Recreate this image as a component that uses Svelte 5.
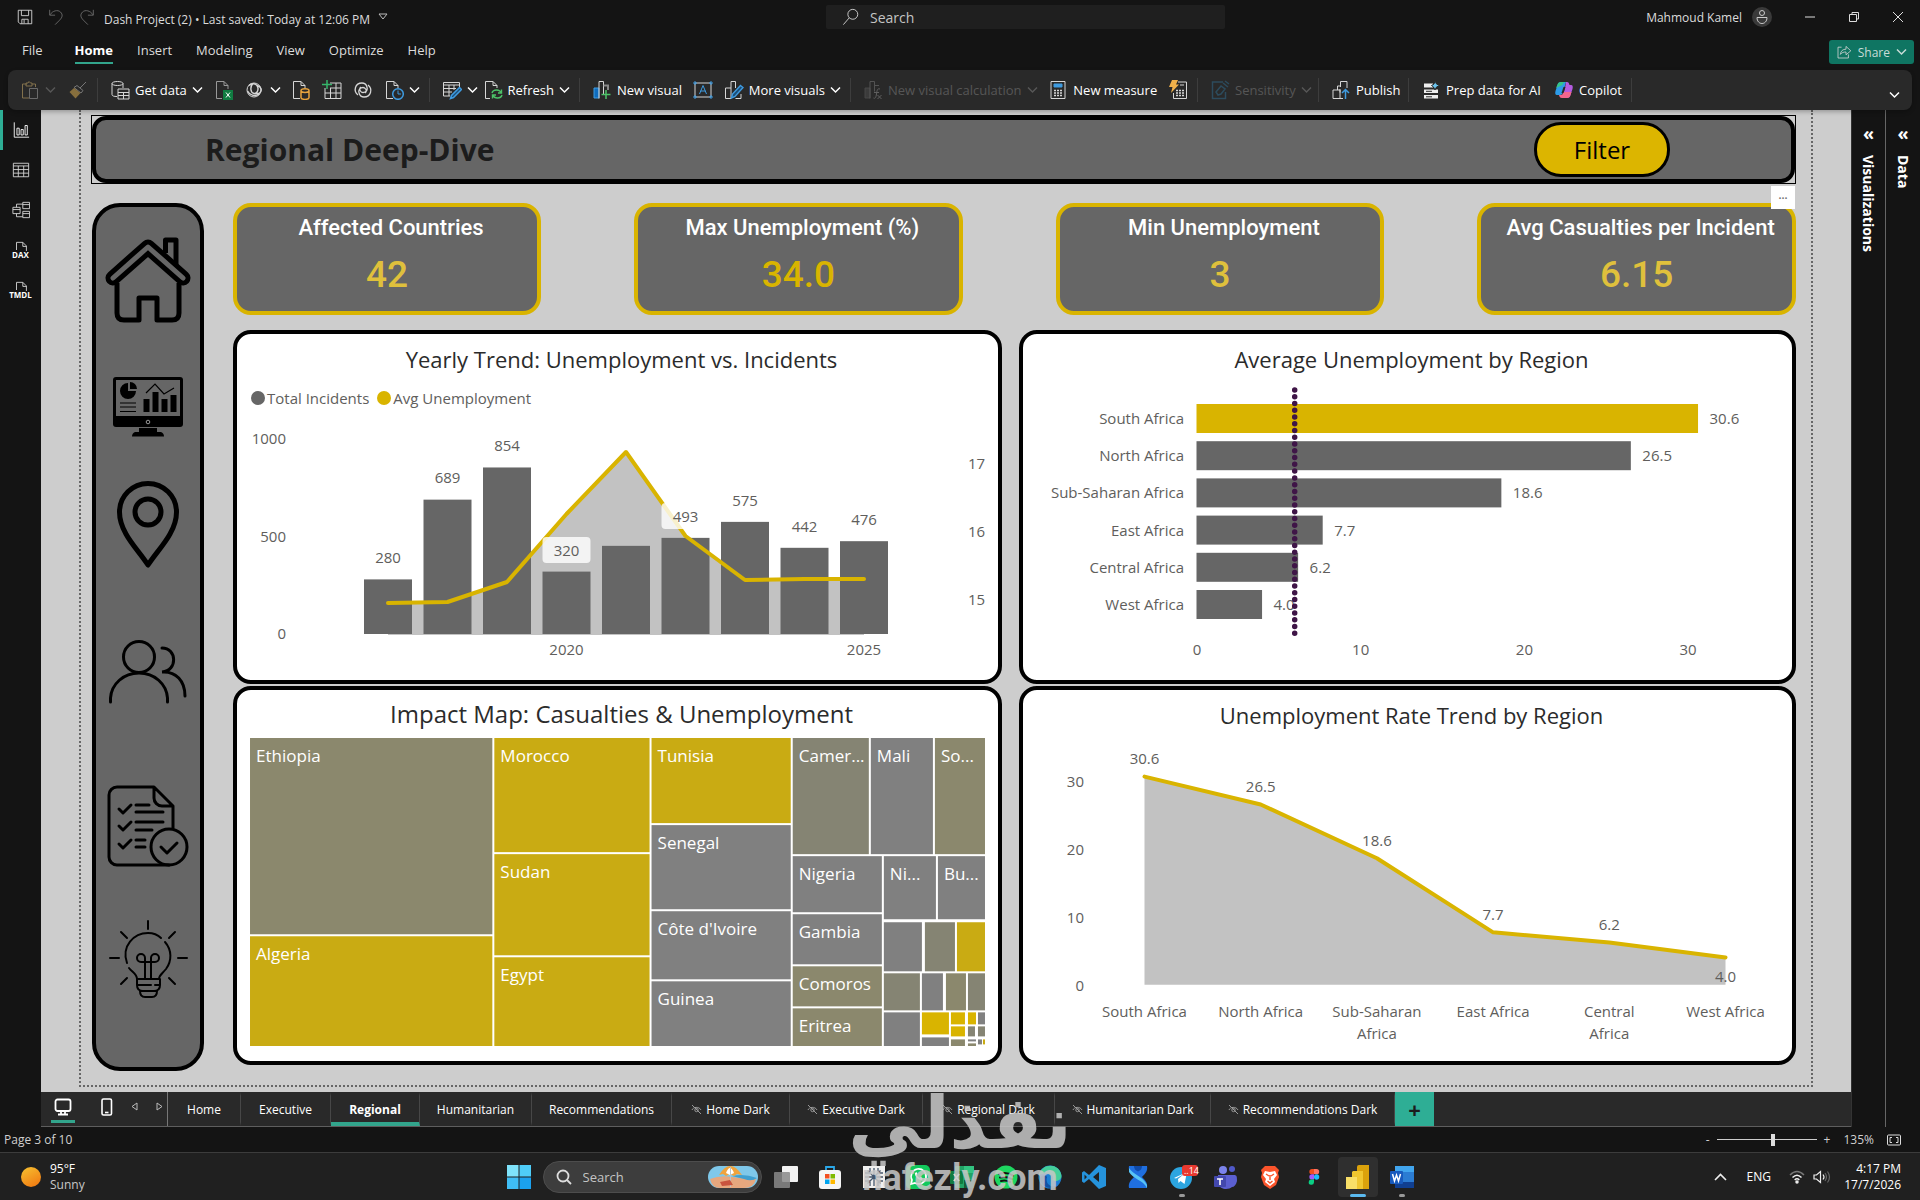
<script>
  const W = '#d6d6d6';

  // ribbon, title bar and rail glyphs, all on a 20x20 grid
  const icons = {
    save: `<path d="M2.5 2.5h15v15H4.5l-2-2zM6 2.5v6h8v-6M6.500 17.500v-5h7v5M9 13v4"/>`,
    undo: `<path d="M3 2v6h6M3.500 7.500C6 3 12 1.500 15 4.500c3 3 2 6-1 9l-5 5"/>`,
    redo: `<path d="M17 2v6h-6M16.500 7.500C14 3 8 1.500 5 4.500c-3 3-2 6 1 9l5 5"/>`,
    search: `<circle cx="12" cy="7" r="5.500"/><path d="M8 11l-6.500 7.500"/>`,
    paste: `<path d="M7 4H2.500v14H9M12 4h3.500v3M6 3h2l1-1.500L10.500 3H12v3H6z" stroke="#a8905c"/><path d="M9.500 8.500h8v10h-8z" stroke="#888"/>`,
    brush: `<path d="M18 2l-6 6M9 5.500l6 5-2 2.500-7-5.500z" stroke="#999"/><path d="M6 8l6.500 5-5 5.500L1.500 12z" fill="#b08d46" stroke="none"/>`,
    data: `<path d="M2 3.500v11c0 1.500 2 2 5 2M13 3.500V8M2 3.500C2 2.500 4 1.500 7.500 1.500S13 2.500 13 3.500 11 5.500 7.500 5.500 2 4.500 2 3.500zM8 9h11v10H8zM8 12.500h11M8 15.500h11M13.500 12.500V19"/>`,
    excel: `<path d="M8 18.500H2.500v-17H10l4 4V9M10 1.500v4h4" stroke="#999"/><path d="M9 10h10v10H9z" fill="#107c41" stroke="none"/><path d="M12 12.500l4 5M16 12.500l-4 5" stroke="#fff"/>`,
    lake: `<circle cx="9" cy="10" r="7"/><path d="M4 5.500c2-2 6-2.500 8 0 2 3 1 8-3 8-4-1-4-7-1-10M12 5.500c4 1 6 5 2 8l-5 0M2.500 11c2 4 7 6 12 3" stroke-width="1.400"/>`,
    sql: `<path d="M9 18.500H2.500v-17H10l4 4V8M10 1.500v4h4"/><path d="M10 10.500v7c0 2.500 8 2.500 8 0v-7c0-2.500-8-2.500-8 0s8 2.500 8 0" stroke="#e8a33d" stroke-width="1.500"/>`,
    enter: `<path d="M8 3h11v15.500H3V8M3 13h16M8 8h11M8.500 8v10M14 3v15"/><path d="M5 0v9M0 4.500h10" stroke="#35b56a" stroke-width="1.500"/>`,
    verse: `<path d="M5 15C0 11 2 3 9 3c5 0 7 7 3 9-4 2-7-3-4-5M15 5c5 4 3 12-4 12-5 0-7-7-3-9 4-2 7 3 4 5" stroke-width="1.300"/>`,
    recent: `<path d="M9 18.500H2.500v-17H10l4 4V8M10 1.500v4h4"/><circle cx="14" cy="14" r="5.300" stroke="#3f9be0" stroke-width="1.500"/><path d="M14 10.500V14h3" stroke="#3f9be0"/>`,
    transform: `<path d="M8 16H1.500V2.500h16V7M1.500 5h16M1.500 8.500H14M1.500 12H10M7 5v11M12 5v5"/><path d="M17.500 7.500l2 2-8 8-3 1 1-3z" stroke="#3f9be0" fill="#1b4e78" stroke-width="1.500"/>`,
    refresh: `<path d="M7 18.500H2.500v-17H10l4 4V8M10 1.500v4h4"/><path d="M9 13c1-4 8-4 9 0M18.500 9.500V13H15M19 15c-1 4-8 4-9 0M9.500 18.500V15H13" stroke="#4cc267" stroke-width="1.400"/>`,
    visual: `<path d="M2 8h5v10H2z" fill="#0f6cbd" stroke="#3f9be0"/><path d="M7 18.500v-17h4.500v13"/><path d="M11.500 5.500H16V10" stroke="#888" stroke-width="2"/><path d="M14 10v9M9.500 14.500h9" stroke="#4cc267" stroke-width="1.500"/>`,
    text: `<path d="M2 3h16v14H2z"/><path d="M6.500 14L10 5.500l3.500 8.500M7.500 11h5M1 2h2v2H1zM17 2h2v2h-2zM1 16h2v2H1zM17 16h2v2h-2z" stroke="#3f9be0"/>`,
    more: `<path d="M7 18.500H1.500V8H7m0 10.500v-17h4.500V8M17 14v4.500h-5.500"/><path d="M16.500 5.500l2.500 2-8 9-3.500 1.500 1-4z" stroke="#3f9be0" fill="#1b4e78" stroke-width="1.400"/>`,
    calc: `<path d="M2 8h5v10H2z" fill="#444" stroke="#555"/><path d="M7 18.500v-17h4.500v10M11.500 5.500H16" stroke="#666"/><path d="M17 9c-3-1-3 2-3.500 5s-1 5-3 4M11 12.500h5M14.500 15l4 4M18.500 15l-4 4" stroke="#777"/>`,
    measure: `<path d="M3 1.500h14v17H3z"/><path d="M6 4h8v3H6z" fill="#3f9be0" stroke="#3f9be0"/><path d="M6 10.500h2M9 10.500h2M12 10.500h2M6 13h2M9 13h2M12 13h2M6 15.500h2M9 15.500h2M12 15.500h2" stroke-width="1.600"/>`,
    quick: `<path d="M10 2h8.500v16.500h-13V13M12 5h4"/><path d="M8 10.500h2M11 10.500h2M14 10.500h2M8 13h2M11 13h2M14 13h2M8 15.500h2M11 15.500h2M14 15.500h2" stroke-width="1.600"/><path d="M4 0h6L8 4.500h3L3 13l1.500-6H1z" fill="#f0b04a" stroke="none"/>`,
    sensitivity: `<path d="M13 2H2.500v16.500h13V12M6 12l5-6 4 3-4 5-3 1zM13 3l5 4M15 1l4 3" stroke="#2e5a73" stroke-width="1.500"/>`,
    publish: `<path d="M2 10h7v8.500H2zM9 12.500V9M6.500 10V6H10M9.500 7V1.500H16V8M9 18.500h3"/><path d="M14.500 19V9.500M11 13l3.500-3.500L18 13" stroke="#3f9be0" stroke-width="1.500"/>`,
    prep: `<path d="M3 3.500h9v4H3zM3 9.500h14v3.500H3zM3 15h14v3.500H3z" fill="#eee" stroke="none"/><path d="M14 1l1.500 3 3 1.500-3 1.500L14 10l-1.500-3-2-1.500L13 4z" fill="#6cc4ee" stroke="#292929"/><path d="M5 11.300h6M5 16.800h6" stroke="#292929"/>`,
    copilot: `<path d="M7 2h5l-3 10c-.5 2-1.500 3-3.500 3H3c-2 0-2-2-1.500-4L3.500 5C4 3 5 2 7 2z" fill="#2d9be8" stroke="none"/><path d="M2 8l1.500-3.500C4 3 5 2 7 2h5c-2 0-3 1-3.500 3z" fill="#35c48a" stroke="none"/><path d="M12 2h1c1.500 0 2 1 2.500 3H17c2 0 2 2 1.500 4l-2 6c-.5 2-1.500 3-3.500 3H8l3-10z" fill="#b45be0" stroke="none"/><path d="M17.500 12l-1 3c-.5 2-1.500 3-3.500 3H8c-2 0-2.500-1-3-3h1.500c2 0 2.500-1 3-3z" fill="#f3668d" stroke="none"/><path d="M9.500 7l2 0-2 6h-2z" fill="#292929" stroke="none"/>`,
    share: `<path d="M7 4H2.500v13.500h13V13M5.500 13c.5-4.500 3-6.500 7-6.500V3l6 5.500-6 5V10c-3 0-5 .5-7 3z"/>`,
    report: `<path d="M2.500 1.500v16.500H19M5.500 8h2.500v7.500H5.500zM10 9.500h2.500v6H10zM14.500 5h2.500v10.500h-2.500z" stroke="#fff"/>`,
    table: `<path d="M1.500 2.500h17v15h-17zM1.500 5.500h17M1.500 9.500h17M1.500 13.500h17M7 5.500v12M13 5.500v12"/>`,
    model: `<path d="M1 7h8v7H1zM1 9.500h8M12 1.500h7.500v7H12zM12 4h7.500M12 11.500h7.500v7H12zM12 14h7.500M5 7V3.500h7M5 14v3.500h7"/>`,
    sheet: `<path d="M5 10V1.500h7l4 4V12M12 1.500v4.500h4"/>`
  };

  const ribbon = [
    { width: 90, items: [{ icon: 'paste', chevron: true, off: true }, { icon: 'brush', off: true }] },
    { width: 332, items: [{ icon: 'data', label: 'Get data', chevron: true }, { icon: 'excel' }, { icon: 'lake', chevron: true }, { icon: 'sql' }, { icon: 'enter' }, { icon: 'verse' }, { icon: 'recent', chevron: true }] },
    { width: 150, items: [{ icon: 'transform', chevron: true }, { icon: 'refresh', label: 'Refresh', chevron: true }] },
    { width: 271, items: [{ icon: 'visual', label: 'New visual' }, { icon: 'text' }, { icon: 'more', label: 'More visuals', chevron: true }] },
    { width: 347, items: [{ icon: 'calc', label: 'New visual calculation', chevron: true, off: true }, { icon: 'measure', label: 'New measure' }, { icon: 'quick' }] },
    { width: 121, items: [{ icon: 'sensitivity', label: 'Sensitivity', chevron: true, off: true }] },
    { width: 90, items: [{ icon: 'publish', label: 'Publish' }] },
    { width: 223, items: [{ icon: 'prep', label: 'Prep data for AI' }, { icon: 'copilot', label: 'Copilot' }] }
  ];

  const menus = ['File', 'Home', 'Insert', 'Modeling', 'View', 'Optimize', 'Help'];

  const kpis = [
    { title: 'Affected Countries', value: '42', grow: 308 },
    { title: 'Max Unemployment (%)', value: '34.0', grow: 329, deep: true },
    { title: 'Min Unemployment', value: '3', grow: 329 },
    { title: 'Avg Casualties per Incident', value: '6.15', grow: 319 }
  ];

  const years = [
    { n: 280, line: 191, label: 146 },
    { n: 689, line: 190, label: 66 },
    { n: 854, line: 170, label: 34 },
    { n: 320, line: 102, label: 139, boxed: true },
    { n: 452, line: 40 },
    { n: 493, line: 124, label: 105, boxed: true },
    { n: 575, line: 168, label: 89 },
    { n: 442, line: 167, label: 115 },
    { n: 476, line: 167, label: 108 }
  ];
  const yearX = (i) => 151 + i * 59.5;
  const yearLine = years.map((y, i) => `${yearX(i)},${y.line}`).join(' ');

  const regions = [
    { name: ['South Africa'], rate: 30.6, label: 19 },
    { name: ['North Africa'], rate: 26.5, label: 47 },
    { name: ['Sub-Saharan', 'Africa'], rate: 18.6, label: 101 },
    { name: ['East Africa'], rate: 7.7, label: 175 },
    { name: ['Central', 'Africa'], rate: 6.2, label: 185 },
    { name: ['West Africa'], rate: 4.0, label: 237 }
  ];
  const regionX = (i) => 121.5 + i * 116.2;
  const rateY = (r) => 244.7 - r * 6.8;
  const rateLine = regions.map((r, i) => `${regionX(i)},${rateY(r.rate)}`).join(' ');

  const olive = '#8b886d';
  const moss = '#858473';
  const gold = '#c9ab13';
  const bright = '#d9b400';
  const gray = '#808080';

  // x, y, width, height, colour, label
  const tiles = [
    [0, 0, 242, 196, olive, 'Ethiopia'],
    [0, 198, 242, 110, gold, 'Algeria'],
    [244, 0, 155, 114, gold, 'Morocco'],
    [244, 116, 155, 101, gold, 'Sudan'],
    [244, 219, 155, 89, gold, 'Egypt'],
    [401, 0, 139, 85, gold, 'Tunisia'],
    [401, 87, 139, 84, gray, 'Senegal'],
    [401, 173, 139, 68, gray, "Côte d'Ivoire"],
    [401, 243, 139, 65, gray, 'Guinea'],
    [542, 0, 76, 116, moss, 'Camer...'],
    [620, 0, 62, 116, gray, 'Mali'],
    [684, 0, 50, 116, olive, 'So...'],
    [542, 118, 89, 56, gray, 'Nigeria'],
    [542, 176, 89, 50, gray, 'Gambia'],
    [542, 228, 89, 40, olive, 'Comoros'],
    [542, 270, 89, 38, olive, 'Eritrea'],
    [633, 118, 52, 63, gray, 'Ni...'],
    [687, 118, 47, 63, gray, 'Bu...'],
    [633, 184, 38, 49, gray],
    [674, 184, 30, 49, moss],
    [706, 184, 28, 49, gold],
    [633, 235, 36, 37, moss],
    [671, 235, 21, 37, gray],
    [695, 235, 20, 37, olive],
    [717, 235, 17, 37, moss],
    [633, 274, 36, 34, gray],
    [671, 274, 27, 22, bright],
    [671, 299, 27, 9, gray],
    [700, 274, 14, 12, bright],
    [700, 288, 14, 10, bright],
    [700, 301, 14, 7, olive],
    [717, 274, 8, 12, bright],
    [727, 274, 7, 12, gray],
    [717, 288, 7, 10, moss],
    [727, 288, 7, 10, moss],
    [717, 301, 8, 2, gray],
    [717, 305, 8, 3, olive],
    [727, 301, 4, 5, gray],
    [732, 301, 2, 5, gold]
  ];

  const tabs = [
    { name: 'Home', width: 73 },
    { name: 'Executive', width: 90 },
    { name: 'Regional', width: 89, active: true },
    { name: 'Humanitarian', width: 112 },
    { name: 'Recommendations', width: 140 },
    { name: 'Home Dark', width: 118, hidden: true },
    { name: 'Executive Dark', width: 133, hidden: true },
    { name: 'Regional Dark', width: 132, hidden: true },
    { name: 'Humanitarian Dark', width: 156, hidden: true },
    { name: 'Recommendations Dark', width: 184, hidden: true }
  ];

  // taskbar apps, 24x24
  const apps = [
    { name: 'Task view', art: `<rect x="8" y="1" width="16" height="16" rx="1" fill="#f2f2f2"/><rect x="0" y="7" width="16" height="16" rx="1" fill="#8a8a8a" opacity=".85"/>` },
    { name: 'Store', art: `<path d="M8 5V2h8v3" fill="none" stroke="#2aa7e8" stroke-width="1.800"/><rect x="1" y="5" width="22" height="19" rx="3" fill="#f5f5f5"/><path fill="#f25022" d="M7 9h4.500v4.500H7z"/><path fill="#7fba00" d="M12.500 9H17v4.500h-4.500z"/><path fill="#00a4ef" d="M7 14.500h4.500V19H7z"/><path fill="#ffb900" d="M12.500 14.500H17V19h-4.500z"/>` },
    { name: 'Snow', art: `<rect x="1" y="1" width="22" height="22" fill="#f0f0f0"/><path d="M12 3v18M3 12h18M5.500 5.500l13 13M18.500 5.500l-13 13M8 3v5H3M16 3v5h5M8 21v-5H3M16 21v-5h5" stroke="#44566b" stroke-width="1.300" fill="none"/>` },
    { name: 'WhatsApp', art: `<rect width="24" height="24" rx="5" fill="#12c95c"/><path d="M5 19l1-4a7.500 7.500 0 1 1 3 3z" fill="none" stroke="#fff" stroke-width="1.700"/><path d="M9 8c0 4 3 7 7 7l.5-2-2-1-1 1-3-3 1-1-1-2z" fill="#fff"/>` },
    { name: 'Excel', art: `<rect x="5" y="1" width="19" height="22" rx="1" fill="#21a366"/><path d="M14 1h10v7H14z" fill="#33c481"/><path d="M14 15h10v8H14z" fill="#185c37"/><rect y="6" width="13" height="13" rx="1" fill="#107c41"/><path d="M4 9l5 7M9 9l-5 7" stroke="#fff" stroke-width="1.700"/>` },
    { name: 'Spotify', art: `<circle cx="12" cy="12" r="11.500" fill="#1ed760"/><path d="M5 9c5-1.500 10-1 14 1.500M6 12.500c4-1 8-.5 11.500 1.500M7 16c3-.8 6-.5 9 1" fill="none" stroke="#111" stroke-width="2" stroke-linecap="round"/>` },
    { name: 'Edge', art: `<circle cx="12" cy="12" r="11.500" fill="#1b7fd4"/><path d="M1 10C3-2 22-3 23.500 11c0 5-7 6-9 4 3-5-5-9-13.500-5z" fill="#45cf9a"/><path d="M9 12c-2 6 3 11 10 9-7 5-17 0-17-8 2-4 6-3 7-1z" fill="#1252a3"/>` },
    { name: 'VS Code', art: `<path d="M17 0l7 3v18l-7 3L7 14l-5 4-2-1.500v-9L2 6l5 4zM17 7l-6 5 6 5zM2.500 9.500v5L5 12z" fill="#2593dc" fill-rule="evenodd"/>` },
    { name: 'Designer', art: `<path d="M3 1h18c1 5-2 8-5 11 3 3 6 6 5 11H3c-1-5 2-8 5-11-3-3-6-6-5-11z" fill="#1f6fe0"/><path d="M3 3c4 7 14 8 18 17v3C17 15 7 14 3 7z" fill="#58c4f5"/><path d="M8 1h8q0 4-4 5.500Q8 5 8 1z" fill="#0f4aa8"/>` },
    { name: 'Telegram', art: `<circle cx="11" cy="13" r="11" fill="#2ca5e0"/><path d="M4 13l13-6-2.500 12-4-3-2 2-.5-4 6-5-8 4.500z" fill="#fff"/><rect x="12" y="0" width="16" height="11" rx="3" fill="#e8392f"/><text x="14" y="9" font-size="9" fill="#fff">..14</text>`, dot: true },
    { name: 'Teams', art: `<circle cx="9" cy="5" r="4" fill="#7b83eb"/><circle cx="18" cy="4" r="3" fill="#5059c9"/><path d="M4 10h16c3 0 3 2 3 6-1 4-3 6-5 6-3 3-12 3-14-3z" fill="#5b5fd0"/><rect x="0" y="11" width="12" height="11" rx="1" fill="#4348ad"/><path d="M3 14h6M6 14v6" stroke="#fff" stroke-width="1.600"/>` },
    { name: 'Brave', art: `<path d="M7 1h10l4 4-1 3 1 4-3 8-6 4-6-4-3-8 1-4-1-3z" fill="#fb542b"/><path d="M7 6l5 1 5-1 2 4-3 4 1 3-5 4-5-4 1-3-3-4z" fill="#fff"/><path d="M8 9l3 2M16 9l-3 2M12 10v5M9.500 16l2.500 2 2.500-2" stroke="#fb542b" stroke-width="1.400" fill="none"/>` },
    { name: 'Figma', art: `<path d="M10 4h2v5.300h-2a2.650 2.650 0 0 1 0-5.300z" fill="#f24e1e"/><path d="M12 4h2.500a2.650 2.650 0 0 1 0 5.300H12z" fill="#ff7262"/><path d="M10 9.300h2v5.300h-2a2.650 2.650 0 0 1 0-5.300z" fill="#a259ff"/><circle cx="14.600" cy="12" r="2.650" fill="#1abcfe"/><path d="M10 14.600h2v2.700a2.650 2.650 0 1 1-2-2.700z" fill="#0acf83"/>` },
    { name: 'Power BI', art: `<path d="M13 0h10v24H11V2a2 2 0 0 1 2-2z" fill="#dba20b"/><path d="M7 6h10v18H6V7z" fill="#f0c62f"/><path d="M0 12h11v12H0z" fill="#f9df68"/>`, active: true },
    { name: 'Word', art: `<rect x="5" y="1" width="19" height="22" rx="1" fill="#2b7cd3"/><path d="M5 1h19v6H5z" fill="#41a5ee"/><path d="M5 17h19v6H5z" fill="#103f91"/><rect y="6" width="13" height="13" rx="1" fill="#185abd"/><path d="M2.500 9l2 7 2-6 2 6 2-7" fill="none" stroke="#fff" stroke-width="1.500"/>`, dot: true }
  ];
</script>

{#snippet icon(name, size = 20)}
  <svg class="icon" width={size} height={size} viewBox="0 0 20 20" fill="none" stroke={W} aria-hidden="true">{@html icons[name]}</svg>
{/snippet}

{#snippet chevron()}
  <svg class="icon" width="11" height="8" viewBox="0 0 11 8" fill="none" stroke="currentColor" stroke-width="1.500" aria-hidden="true"><path d="M1 1.500l4.500 4.500L10 1.500" /></svg>
{/snippet}

<div class="desktop">
  <header class="titlebar">
    <div class="quick">
      <button aria-label="Save">{@render icon('save', 18)}</button>
      <button class="faded" aria-label="Undo">{@render icon('undo', 18)}</button>
      <button class="faded" aria-label="Redo">{@render icon('redo', 18)}</button>
      <span class="filename">Dash Project (2) • Last saved: Today at 12:06 PM</span>
      <svg width="10" height="8" viewBox="0 0 10 8" fill="none" stroke="#bbb" aria-hidden="true"><path d="M1 1h8L5 6z" /></svg>
    </div>
    <label class="search">
      {@render icon('search', 18)}
      <input type="text" placeholder="Search" aria-label="Search" />
    </label>
    <div class="account">
      <span>Mahmoud Kamel</span>
      <svg width="20" height="20" viewBox="0 0 20 20" fill="none" stroke="#ccc" aria-hidden="true"><circle cx="10" cy="10" r="10" fill="#3a3a3a" stroke="none" /><circle cx="10" cy="6" r="2.500" /><path d="M5 10.500h10c0 8-10 8-10 0z" /></svg>
      <button aria-label="Minimize"><svg width="12" height="12" viewBox="0 0 12 12" stroke="#ddd"><path d="M1 6h10" /></svg></button>
      <button aria-label="Restore"><svg width="12" height="12" viewBox="0 0 12 12" fill="none" stroke="#ddd"><path d="M1.500 3.500h7v7h-7zM4 3.500v-2h6.500V8h-2" /></svg></button>
      <button aria-label="Close"><svg width="12" height="12" viewBox="0 0 12 12" stroke="#ddd"><path d="M1 1l10 10M11 1L1 11" /></svg></button>
    </div>
  </header>

  <nav class="menubar">
    {#each menus as menu}
      <button class:current={menu === 'Home'}>{menu}</button>
    {/each}
    <button class="share">{@render icon('share', 16)}<span>Share</span>{@render chevron()}</button>
  </nav>

  <div class="ribbon">
    {#each ribbon as group}
      <div class="group" style="width: {group.width}px">
        {#each group.items as item}
          <button class:off={item.off} aria-label={item.label ?? item.icon}>
            {@render icon(item.icon)}
            {#if item.label}<span>{item.label}</span>{/if}
            {#if item.chevron}{@render chevron()}{/if}
          </button>
        {/each}
      </div>
    {/each}
    <button class="collapse" aria-label="Collapse ribbon">{@render chevron()}</button>
  </div>

  <div class="workspace">
    <nav class="rail">
      <button class="current" aria-label="Report view">{@render icon('report', 18)}</button>
      <button aria-label="Table view">{@render icon('table', 18)}</button>
      <button aria-label="Model view">{@render icon('model', 18)}</button>
      <button>{@render icon('sheet', 18)}<small>DAX</small></button>
      <button>{@render icon('sheet', 18)}<small>TMDL</small></button>
    </nav>

    <div class="center">
      <main class="canvas">
        <div class="page">
          <div class="selected">
            <header class="banner">
              <h1>Regional Deep-Dive</h1>
              <button class="filter">Filter</button>
            </header>
            <button class="options" aria-label="More options">•••</button>
          </div>

          <div class="board">
            <nav class="sidebar">
              <a href="#home" aria-label="Home">
                <svg width="86" height="86" viewBox="0 0 86 86" fill="none" stroke="#000" stroke-width="5" stroke-linejoin="round">
                  <path d="M60.500 16V3H71v27M12 46v30q0 7 7 7h15V61h18v22h15q7 0 7-7V46" />
                  <path d="M8 41L43 10l35 31" stroke-width="15" stroke-linecap="round" />
                  <path d="M8 41L43 10l35 31" stroke="#666" stroke-width="5" stroke-linecap="round" />
                </svg>
              </a>
              <a href="#executive" aria-label="Executive">
                <svg width="70" height="60" viewBox="0 0 70 60">
                  <rect width="70" height="50" rx="3" />
                  <path d="M3 3h64v36H3z" fill="#666" />
                  <path d="M26 51h18v4h4q3 1 3 4.500H19q0-3.500 3-4.500h4zM15 6a8 8 0 1 0 8 8h-8zM17 5v7h7a7 7 0 0 0-7-7zM30.500 22h6v13h-6zM39.500 15h6v20h-6zM48.500 22h6v13h-6zM57.500 18h6v17h-6z" />
                  <path d="M7 26h16M7 30h16M7 34.500h16M33 16l9-9 9 10 10-6" fill="none" stroke="#000" stroke-width="1.200" />
                  <circle cx="35" cy="45" r="1.800" stroke="#999" />
                </svg>
              </a>
              <a href="#regional" aria-label="Regional">
                <svg width="62" height="88" viewBox="0 0 62 88" fill="none" stroke="#000" stroke-width="5" stroke-linejoin="round">
                  <path d="M31 84C24 73 15 64 9 53 5 46 2.500 39 2.500 31a28.500 28.500 0 0 1 57 0c0 8-2.500 15-6.500 22-6 11-15 20-22 31z" />
                  <circle cx="31" cy="31" r="13" />
                </svg>
              </a>
              <a href="#humanitarian" aria-label="Humanitarian">
                <svg width="78" height="64" viewBox="0 0 78 64" fill="none" stroke="#000" stroke-width="3" stroke-linecap="round">
                  <circle cx="30" cy="17" r="15.500" />
                  <path d="M1.500 62v-4c1-14 13-25 28.500-25s27.500 11 28.500 25v4M53 8c15 0 16 23 0 24 14-1 23 9 23 24" />
                </svg>
              </a>
              <a href="#executive-dark" aria-label="Checklist">
                <svg width="82" height="82" viewBox="0 0 82 82" fill="none" stroke="#000" stroke-width="3" stroke-linecap="round" stroke-linejoin="round">
                  <path d="M66 43V21L47 2H10a8 8 0 0 0-8 8v62a8 8 0 0 0 8 8h52M47 2v11a8 8 0 0 0 8 8h11M12 24l4 4 8-8M12 41l4 4 8-8M12 59l4 4 8-8M29 20h13M29 27h27M29 37h27M29 45h16M29 55h9M29 62h9M54 62l6 6 10-10" />
                  <circle cx="62" cy="62" r="18" />
                </svg>
              </a>
              <a href="#recommendations" aria-label="Recommendations">
                <svg width="79" height="78" viewBox="0 0 79 78" fill="none" stroke="#000" stroke-width="2" stroke-linecap="round">
                  <path d="M39 1v8M12 12l6 6M66 12l-6 6M1 38h9M69 38h9M12 64l6-6M66 64l-6-6" />
                  <path d="M18 43C12 26 25 13 39 13q8 0 13 5M56 22c7 8 7 19 1 27-4 5-7 6-7 10H28c0-5-5-7-8-11M28 59v6q0 6 6 6h11q6 0 6-6v-6M28 65h14M46 65h5M31 71q0 6 5 6h7q5 0 5-6M36 58V38a4 4 0 1 0-4 4h14a4 4 0 1 0-4-4v20" />
                </svg>
              </a>
            </nav>

            <div class="content">
              <section class="kpis">
                {#each kpis as kpi}
                  <article class="kpi" style="flex-grow: {kpi.grow}">
                    <h2>{kpi.title}</h2>
                    <p class:deep={kpi.deep}>{kpi.value}</p>
                  </article>
                {/each}
              </section>

              <section class="panels">
                <article class="panel">
                  <h2>Yearly Trend: Unemployment vs. Incidents</h2>
                  <div class="legend">
                    <span><i></i>Total Incidents</span>
                    <span><i class="gold"></i>Avg Unemployment</span>
                  </div>
                  <svg class="chart" viewBox="0 0 761 268">
                    <text class="end" x="49" y="32">1000</text>
                    <text class="end" x="49" y="130">500</text>
                    <text class="end" x="49" y="227">0</text>
                    <text x="731" y="57">17</text>
                    <text x="731" y="125">16</text>
                    <text x="731" y="193">15</text>
                    <polygon points="{yearX(0)},223 {yearLine} {yearX(8)},223" fill="#c2c2c2" />
                    {#each years as year, i}
                      <rect x={yearX(i) - 24} y={222 - year.n * 0.195} width="48" height={year.n * 0.195} fill="#666" />
                    {/each}
                    <polyline points={yearLine} class="line" />
                    {#each years as year, i}
                      {#if year.boxed}
                        <rect x={yearX(i) - 24} y={year.label - 14} width="48" height="26" rx="4" fill="#fff" opacity=".8" />
                      {/if}
                      {#if year.label}
                        <text class="middle" x={yearX(i)} y={year.label + 5}>{year.n}</text>
                      {/if}
                    {/each}
                    <text class="middle" x={yearX(3)} y="243">2020</text>
                    <text class="middle" x={yearX(8)} y="243">2025</text>
                  </svg>
                </article>

                <article class="panel">
                  <h2>Average Unemployment by Region</h2>
                  <svg class="chart" viewBox="0 0 769 296">
                    {#each regions as region, i}
                      <text class="end" x="161" y={40 + i * 37.2}>{region.name.join(' ')}</text>
                      <rect x="173.500" y={20 + i * 37.2} width={region.rate * 16.39} height="29" fill={i === 0 ? bright : '#666'} />
                      <text x={185 + region.rate * 16.39} y={40 + i * 37.2}>{region.rate.toFixed(1)}</text>
                    {/each}
                    <path d="M271.700 6V249.500" stroke="#3f1547" stroke-width="5.500" stroke-linecap="round" stroke-dasharray="0 6.760" />
                    {#each [0, 10, 20, 30] as tick}
                      <text class="middle" x={174 + tick * 16.37} y="271">{tick}</text>
                    {/each}
                  </svg>
                </article>

                <article class="panel">
                  <h2 class="large">Impact Map: Casualties &amp; Unemployment</h2>
                  <svg class="treemap" viewBox="0 0 734 308">
                    {#each tiles as [x, y, w, h, fill, label]}
                      <rect {x} {y} width={w} height={h} {fill} />
                      {#if label}<text x={x + 6} y={y + 24}>{label}</text>{/if}
                    {/each}
                  </svg>
                </article>

                <article class="panel">
                  <h2>Unemployment Rate Trend by Region</h2>
                  <svg class="chart" viewBox="0 0 769 320">
                    {#each [0, 10, 20, 30] as tick}
                      <text class="end" x="61" y={rateY(tick) + 6}>{tick}</text>
                    {/each}
                    <polygon points="{regionX(0)},{rateY(0)} {rateLine} {regionX(5)},{rateY(0)}" fill="#c2c2c2" />
                    <polyline points={rateLine} class="line" />
                    {#each regions as region, i}
                      <text class="middle" x={regionX(i)} y={region.label + 5}>{region.rate.toFixed(1)}</text>
                      {#each region.name as part, row}
                        <text class="middle" x={regionX(i)} y={277 + row * 22}>{part}</text>
                      {/each}
                    {/each}
                  </svg>
                </article>
              </section>
            </div>
          </div>
        </div>
      </main>

      <nav class="tabs">
        <div class="views">
          <button class="current" aria-label="Desktop layout"><svg width="18" height="18" viewBox="0 0 18 18" fill="none" stroke="#fff" stroke-width="1.800"><rect x="1.500" y="1.500" width="15" height="11.500" rx="2" /><path d="M7 13v3M11 13v3M4 16.500h10" /></svg></button>
          <button aria-label="Mobile layout"><svg width="12" height="18" viewBox="0 0 12 18" fill="none" stroke="#fff" stroke-width="1.600"><rect x="1" y="1" width="9.500" height="16" rx="1.500" /><path d="M4 14.500h3.500" /></svg></button>
          <button aria-label="Previous pages"><svg width="7" height="9" viewBox="0 0 7 9" fill="none" stroke="#bbb"><path d="M6 1v7L1 4.500z" /></svg></button>
          <button aria-label="Next pages"><svg width="7" height="9" viewBox="0 0 7 9" fill="none" stroke="#bbb"><path d="M1 1v7l5-3.500z" /></svg></button>
        </div>
        {#each tabs as tab}
          <button class="tab" class:active={tab.active} style="width: {tab.width}px">
            {#if tab.hidden}
              <svg width="11" height="11" viewBox="0 0 11 11" fill="none" stroke="#999" aria-hidden="true"><path d="M1 1l9 9M1 6c1-3 7-4 9 0" /><circle cx="5.500" cy="6" r="1.700" /></svg>
            {/if}
            {tab.name}
          </button>
        {/each}
        <button class="add" aria-label="New page">+</button>
      </nav>
    </div>

    <button class="pane"><span class="fold">«</span><span class="vertical">Visualizations</span></button>
    <button class="pane"><span class="fold">«</span><span class="vertical">Data</span></button>
  </div>

  <footer class="status">
    <span class="count">Page 3 of 10</span>
    <span>-</span>
    <input type="range" min="10" max="250" value="145" aria-label="Zoom" />
    <span>+</span>
    <span class="percent">135%</span>
    <button aria-label="Fit to page"><svg width="14" height="12" viewBox="0 0 14 12" fill="none" stroke="#ddd"><rect x=".5" y="1" width="13" height="10" rx="1" /><path d="M5 3.500H3v5h2M9 3.500h2v5H9" /></svg></button>
  </footer>

  <footer class="taskbar">
    <button class="weather">
      <i></i>
      <span>95°F<br /><em>Sunny</em></span>
    </button>
    <div class="apps">
      <button class="app" aria-label="Start">
        <svg width="24" height="24" viewBox="0 0 24 24"><path d="M0 0h11.500v11.500H0z" fill="#7fe3fb" /><path d="M12.500 0H24v11.500H12.500z" fill="#4fcdf8" /><path d="M0 12.500h11.500V24H0z" fill="#3fbdf5" /><path d="M12.500 12.500H24V24H12.500z" fill="#1ba1ee" /></svg>
      </button>
      <label class="find">
        <svg width="16" height="16" viewBox="0 0 16 16" fill="none" stroke="#ddd" stroke-width="1.800" aria-hidden="true"><circle cx="7" cy="7" r="5.500" /><path d="M11 11l4 4" /></svg>
        <input type="text" placeholder="Search" aria-label="Search Windows" />
        <svg width="50" height="26" viewBox="0 0 50 26" aria-hidden="true">
          <rect y="2" width="50" height="22" rx="11" fill="#7fc8ea" />
          <path d="M2 15q10-4 22-2t24 2q-2 9-12 9H12Q4 24 2 15z" fill="#e6a77e" />
          <path d="M24 12q12-3 25 2-5 4-13 1z" fill="#3f9fd0" />
          <path d="M11 11Q22-7 34 11l-5-1-3 2-4-2-4 2-3-2z" fill="#f0a33c" />
          <path d="M18 9q4-10 8 0l-4 2z" fill="#fff" /><path d="M22.500 3v20" stroke="#b9c4cc" />
          <path d="M12 18l10-2 3 5-11 1z" fill="#c9543e" />
        </svg>
      </label>
      {#each apps as app}
        <button class="app" class:running={app.active} class:dotted={app.dot} aria-label={app.name}>
          <svg width="24" height="24" viewBox="0 0 24 24">{@html app.art}</svg>
        </button>
      {/each}
    </div>
    <div class="tray">
      <svg width="13" height="8" viewBox="0 0 13 8" fill="none" stroke="#eee" stroke-width="1.600" aria-hidden="true"><path d="M1 7l5.500-5.500L12 7" /></svg>
      <span class="lang">ENG</span>
      <svg width="16" height="14" viewBox="0 0 16 14" fill="none" stroke="#eee" stroke-width="1.500" aria-hidden="true"><path d="M1 5q7-7 14 0" stroke="#777" /><path d="M3.500 7.500q4.500-4.500 9 0M5.700 10q2.300-2.300 4.600 0" /><circle cx="8" cy="12" r="1" fill="#eee" /></svg>
      <svg width="18" height="14" viewBox="0 0 18 14" fill="none" stroke="#eee" stroke-width="1.200" aria-hidden="true"><path d="M1 5h2.500L7.500 1.500v11L3.500 9H1zM10 4.500q2 2.500 0 5" /><path d="M12 3q3 4 0 8M14.500 1.500q4 5.500 0 11" stroke="#666" /></svg>
      <time>4:17 PM<br />17/7/2026</time>
    </div>
  </footer>

  <div class="watermark">
    <strong lang="ar">نفذلي</strong>
    <b>nafezly.com</b>
  </div>
</div>

<style>
  :global(body) {
    margin: 0;
    background: #141414;
  }

  .desktop {
    position: relative;
    display: flex;
    flex-direction: column;
    min-height: 100vh;
    overflow: hidden;
    background: #141414;
    color: #fff;
    font-family: 'Segoe UI', 'Open Sans', sans-serif;
    font-size: 13px;
  }

  button {
    display: flex;
    align-items: center;
    padding: 0;
    border: 0;
    background: none;
    color: inherit;
    font: inherit;
    white-space: nowrap;
  }

  input {
    min-width: 0;
    border: 0;
    background: none;
    color: #ccc;
    font: inherit;
  }

  input::placeholder {
    color: #c4c4c4;
  }

  svg {
    flex: none;
  }

  h1,
  h2,
  p {
    margin: 0;
  }

  /* title bar */
  .titlebar {
    display: grid;
    grid-template-columns: 826fr 399fr 695fr;
    align-items: center;
    height: 34px;
  }

  .quick,
  .account {
    display: flex;
    align-items: center;
    font-size: 12px;
  }

  .quick {
    gap: 12px;
    padding-left: 16px;
  }

  .quick svg {
    margin-right: 1px;
  }

  .faded {
    opacity: 0.45;
  }

  .filename {
    margin: 5px -4px 0 -5px;
    color: #dcdcdc;
  }

  .search {
    display: flex;
    align-items: center;
    gap: 8px;
    height: 24px;
    padding-left: 16px;
    border-radius: 2px;
    background: #1f1f1f;
    font-size: 14px;
  }

  .account {
    justify-content: flex-end;
    padding-right: 16px;
    color: #dcdcdc;
  }

  .account svg {
    margin-left: 10px;
  }

  .account button {
    margin-left: 22px;
  }

  /* menus */
  .menubar {
    display: flex;
    align-items: center;
    gap: 24px;
    height: 36px;
    padding: 0 6px 0 22px;
    color: #dcdcdc;
  }

  .menubar button {
    height: 24px;
    padding-bottom: 2px;
    border-bottom: 2px solid transparent;
  }

  .menubar button:first-child {
    margin-right: 8px;
  }

  .menubar .current {
    border-color: #32a58c;
    color: #fff;
    font-weight: 700;
  }

  .menubar .share {
    gap: 6px;
    margin-left: auto;
    padding: 0 7px;
    border: 0;
    border-radius: 3px;
    background: #0f7562;
    color: #c8dcd7;
    font-size: 12px;
  }

  /* ribbon */
  .ribbon {
    position: relative;
    z-index: 1;
    display: flex;
    align-items: center;
    height: 40px;
    margin: 0 8px;
    border-radius: 8px;
    background: #292929;
    box-shadow: 0 2px 4px rgba(0, 0, 0, 0.25);
  }

  .group {
    box-sizing: border-box;
    display: flex;
    align-items: center;
    justify-content: space-between;
    height: 24px;
    padding: 0 9px 0 12px;
    border-right: 1px solid #3d3d3d;
  }

  .group button {
    gap: 5px;
  }

  .off {
    opacity: 0.7;
    color: #6a6a6a;
  }

  .collapse {
    margin: 10px 12px 0 auto;
  }

  /* workspace */
  .workspace {
    display: flex;
    flex: 1;
  }

  .rail {
    display: flex;
    flex-direction: column;
    width: 41px;
  }

  .rail button {
    flex-direction: column;
    justify-content: center;
    height: 40px;
  }

  .rail .current {
    border-left: 3px solid #2eae95;
    padding-right: 3px;
  }

  .rail small {
    margin-top: -8px;
    background: #141414;
    font-size: 8px;
    font-weight: 700;
    line-height: 8px;
  }

  .center {
    display: flex;
    flex: 1;
    flex-direction: column;
    min-width: 0;
  }

  .canvas {
    display: flex;
    flex: 1;
    padding: 0 38px 5px;
    background: #cdcdcd;
  }

  .page {
    display: flex;
    flex: 1;
    flex-direction: column;
    min-width: 0;
    padding: 5px 15px 14px 10px;
    border: 2px dotted #666;
    border-top: 0;
  }

  .selected {
    position: relative;
    border: 1px solid #000;
  }

  .banner {
    display: flex;
    align-items: center;
    justify-content: space-between;
    height: 59px;
    padding: 0 121px 0 109px;
    border: 4px solid #000;
    border-radius: 14px;
    background: #666;
    color: #1c1c1c;
  }

  h1 {
    font-size: 30px;
    font-weight: 700;
    line-height: 56px;
  }

  .filter {
    justify-content: center;
    width: 136px;
    height: 55px;
    border: 3px solid #000;
    border-radius: 27px;
    background: #dcb500;
    color: #000;
    font-size: 24px;
  }

  .options {
    position: absolute;
    top: 70px;
    right: 0;
    justify-content: center;
    width: 24px;
    height: 23px;
    background: #fff;
    color: #777;
    font-size: 8px;
  }

  .board {
    display: flex;
    flex: 1;
    gap: 29px;
    padding: 19px 0 0 1px;
  }

  .sidebar {
    box-sizing: border-box;
    display: grid;
    grid-template-rows: 146fr 107fr 130fr 162fr 146fr 120fr 48fr;
    place-items: center;
    width: 112px;
    border: 4px solid #000;
    border-radius: 28px;
    background: #666;
  }

  .sidebar a {
    display: flex;
  }

  .content {
    display: flex;
    flex: 1;
    flex-direction: column;
    gap: 15px;
    min-width: 0;
    padding-bottom: 6px;
  }

  .kpis {
    display: flex;
    gap: 93px;
  }

  .kpi {
    box-sizing: border-box;
    flex: 1 1 0;
    height: 112px;
    padding-top: 7px;
    border: 4px solid #d9b400;
    border-radius: 18px;
    background: #666;
    font-family: Roboto, sans-serif;
    text-align: center;
    white-space: nowrap;
  }

  .kpi h2 {
    padding-left: 8px;
    font-size: 22px;
    font-weight: 500;
    line-height: 28px;
  }

  .kpi p {
    color: #dfc03c;
    font-size: 37px;
    font-weight: 500;
    line-height: 66px;
  }

  .kpi .deep {
    color: #d9b400;
  }

  .panels {
    display: grid;
    flex: 1;
    grid-template-columns: 769fr 777fr;
    grid-template-rows: 354fr 379fr;
    gap: 2px 17px;
  }

  .panel {
    min-width: 0;
    border: 4px solid #000;
    border-radius: 18px;
    background: #fff;
    color: #605e5c;
  }

  .panel h2 {
    padding-left: 8px;
    color: #2b2b2b;
    font-size: 22px;
    font-weight: 400;
    line-height: 50px;
    text-align: center;
  }

  .panel .large {
    font-size: 24px;
    line-height: 48px;
  }

  .legend {
    display: flex;
    gap: 8px;
    height: 28px;
    padding-left: 14px;
    font-size: 15px;
    line-height: 28px;
  }

  .legend span {
    display: flex;
    align-items: center;
    gap: 2px;
  }

  .legend i {
    width: 14px;
    height: 14px;
    border-radius: 50%;
    background: #666;
  }

  .legend .gold {
    background: #d9b400;
  }

  .chart,
  .treemap {
    display: block;
    width: 100%;
    font-size: 15px;
  }

  .chart text {
    fill: #605e5c;
  }

  .chart .end {
    text-anchor: end;
  }

  .chart .middle {
    text-anchor: middle;
  }

  .line {
    fill: none;
    stroke: #d9b400;
    stroke-width: 4;
    stroke-linejoin: round;
    stroke-linecap: round;
  }

  .treemap {
    box-sizing: border-box;
    padding: 0 13px;
    font-size: 17px;
  }

  .treemap text {
    fill: #fff;
  }

  /* page tabs */
  .tabs {
    box-sizing: border-box;
    display: flex;
    height: 35px;
    border-bottom: 1px solid #5e5e5e;
    background: #292929;
    font-size: 12px;
  }

  .views {
    box-sizing: border-box;
    display: flex;
    align-items: center;
    gap: 18px;
    width: 127px;
    padding-left: 10px;
    border-right: 1px solid #777;
  }

  .views button {
    height: 27px;
    padding-bottom: 2px;
    border-bottom: 3px solid transparent;
  }

  .views .current {
    margin-right: 8px;
    padding: 0 3px 2px;
    border-color: #32a58c;
  }

  .tab {
    box-sizing: border-box;
    gap: 4px;
    justify-content: center;
    border-right: 1px solid #474747;
    border-bottom: 4px solid transparent;
    border-top: 4px solid transparent;
  }

  .active {
    border-bottom-color: #32a58c;
    font-weight: 700;
  }

  .add {
    justify-content: center;
    width: 39px;
    background: #2eae95;
    color: #1c1c1c;
    font-size: 22px;
    font-weight: 700;
    line-height: 30px;
  }

  .pane {
    box-sizing: border-box;
    flex-direction: column;
    gap: 9px;
    width: 35px;
    padding-top: 10px;
    border-right: 1px solid #666;
    border-left: 1px solid #333;
    font-size: 14px;
    font-weight: 700;
  }

  .pane:last-child {
    width: 34px;
    border: 0;
  }

  .fold {
    font-size: 18px;
    line-height: 26px;
  }

  .vertical {
    writing-mode: vertical-rl;
  }

  /* status bar */
  .status {
    display: flex;
    align-items: center;
    gap: 7px;
    height: 25px;
    padding: 0 19px 0 4px;
    color: #d0d0d0;
    font-size: 12px;
  }

  .count {
    flex: 1;
  }

  .percent {
    padding: 0 6px;
  }

  input[type='range'] {
    width: 100px;
    height: 14px;
    margin: 0;
    appearance: none;
    background: linear-gradient(#ccc, #ccc) center / 100% 1px no-repeat;
  }

  input[type='range']::-webkit-slider-thumb {
    width: 4px;
    height: 12px;
    appearance: none;
    background: #ddd;
  }

  /* windows taskbar */
  .taskbar {
    display: grid;
    grid-template-columns: 1fr auto 1fr;
    align-items: center;
    height: 47px;
    border-top: 1px solid #3c3c3c;
    background: #202020;
    font-size: 12px;
    line-height: 16px;
  }

  .weather {
    gap: 9px;
    padding-left: 21px;
    text-align: left;
  }

  .weather i {
    width: 20px;
    height: 20px;
    border-radius: 50%;
    background: linear-gradient(150deg, #f7c331, #f0730f);
  }

  .weather em {
    color: #c8c8c8;
    font-style: normal;
  }

  .apps {
    display: flex;
    align-items: center;
    gap: 4px;
  }

  .app {
    position: relative;
    justify-content: center;
    width: 40px;
    height: 40px;
    border-radius: 4px;
  }

  .app svg {
    overflow: visible;
  }

  .running {
    background: #2f2f2f;
  }

  .running::after,
  .dotted::after {
    position: absolute;
    bottom: 0;
    width: 6px;
    height: 3px;
    border-radius: 2px;
    background: #999;
    content: '';
  }

  .running::after {
    width: 16px;
    background: #5bbaf0;
  }

  .find {
    box-sizing: border-box;
    display: flex;
    align-items: center;
    gap: 9px;
    width: 219px;
    height: 32px;
    padding: 0 3px 0 12px;
    border: 1px solid #4d4d4d;
    border-radius: 16px;
    background: #3d3d3d;
    font-size: 13px;
  }

  .find input {
    flex: 1;
  }

  .tray {
    display: flex;
    align-items: center;
    justify-content: flex-end;
    gap: 8px;
    padding-right: 19px;
  }

  .lang {
    padding: 0 10px 0 12px;
  }

  time {
    min-width: 62px;
    text-align: right;
  }

  .watermark {
    position: absolute;
    bottom: 4px;
    left: 50%;
    display: flex;
    flex-direction: column;
    align-items: center;
    color: #c8c8c8;
    opacity: 0.85;
    pointer-events: none;
    transform: translateX(-50%);
  }

  .watermark strong {
    font-family: 'DejaVu Sans', sans-serif;
    font-size: 73px;
    line-height: 74px;
  }

  .watermark b {
    font-family: Roboto, sans-serif;
    font-size: 36px;
    line-height: 36px;
  }
</style>
